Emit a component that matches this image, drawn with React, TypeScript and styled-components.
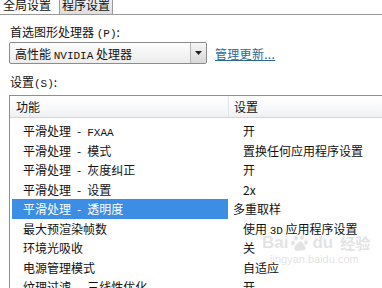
import React from "react";
import styled, { createGlobalStyle } from "styled-components";

const GlobalStyle = createGlobalStyle`
  html, body {
    margin: 0;
    padding: 0;
    background: #fff;
  }
  body {
    font-family: "Noto Sans CJK SC", "Liberation Sans", sans-serif;
    font-size: 12px;
    color: #111;
    overflow: hidden;
  }
`;

const Window = styled.div`
  position: relative;
  width: 382px;
  height: 288px;
  overflow: hidden;
  background: #fff;
`;

const TabStrip = styled.div`
  display: flex;
  align-items: flex-end;
  height: 14px;
  overflow: hidden;
  border-bottom: 1px solid #9a9a9a;
`;

const Tab = styled.div<{ $active?: boolean }>`
  flex: none;
  height: 20px;
  line-height: 20px;
  padding: ${({ $active }) => ($active ? "0 6px 0 4px" : "0 2px")};
  margin-left: ${({ $active }) => ($active ? "-2px" : "1px")};
  box-sizing: border-box;
  border: 1px solid ${({ $active }) => ($active ? "#fff" : "#9a9a9a")};
  border-bottom: none;
  background: ${({ $active }) =>
    $active ? "#fff" : "linear-gradient(#f4f4f4, #dedede)"};
  white-space: nowrap;
`;

const Pane = styled.div`
  padding: 9px 0 0 9px;
`;

const Label = styled.div`
  height: 16px;
  line-height: 16px;
  padding-left: 1px;
  white-space: nowrap;
`;

const Latin = styled.span`
  font-family: "Liberation Mono", monospace;
  font-size: 11px;
`;

const SelectRow = styled.div`
  display: flex;
  align-items: center;
  gap: 8px;
  margin-top: 2px;
  height: 22px;
`;

const Select = styled.div`
  display: flex;
  align-items: center;
  justify-content: space-between;
  width: 198px;
  height: 22px;
  box-sizing: border-box;
  border: 1px solid #8c8c8c;
  border-radius: 2px;
  background: linear-gradient(#fdfdfd, #ececec);
  padding-left: 5px;
  white-space: nowrap;
`;

const ArrowButton = styled.div`
  display: flex;
  align-items: center;
  justify-content: center;
  width: 16px;
  height: 20px;
  box-sizing: border-box;
  border-left: 1px solid #b5b5b5;
  background: linear-gradient(#f6f6f6, #d8d8d8);
  border-radius: 0 2px 2px 0;
`;

const Link = styled.a`
  color: #2a6796;
  text-decoration: underline;
  white-space: nowrap;
  letter-spacing: 0.3px;
`;

const SectionLabel = styled(Label)`
  margin-top: 10px;
`;

const ListBox = styled.div`
  margin-top: 5px;
  width: 390px;
  height: 210px;
  box-sizing: border-box;
  border: 1px solid #8a8e95;
  background: #fff;
`;

const HeaderRow = styled.div`
  display: grid;
  grid-template-columns: 218px 1fr;
  height: 21px;
  border-bottom: 1px solid #d6d6d6;
  background: linear-gradient(#ffffff 0%, #f7f8f9 60%, #eef0f2 100%);
`;

const HeaderCell = styled.div<{ $divider?: boolean }>`
  line-height: 21px;
  padding-left: ${({ $divider }) => ($divider ? "5px" : "6px")};
  border-left: ${({ $divider }) => ($divider ? "1px solid #e2e3e5" : "none")};
`;

const Rows = styled.div`
  padding-top: 3px;
`;

const Row = styled.div`
  display: grid;
  grid-template-columns: 218px 1fr;
  height: 19.5px;
`;

const NameCell = styled.div<{ $selected?: boolean }>`
  line-height: 19px;
  padding-left: 11px;
  margin-left: 2px;
  white-space: pre;
  color: ${({ $selected }) => ($selected ? "#fff" : "#111")};
  background: ${({ $selected }) => ($selected ? "#3b8ee4" : "transparent")};
`;

const ValueCell = styled.div<{ $selected?: boolean }>`
  line-height: 19px;
  padding-left: ${({ $selected }) => ($selected ? "5px" : "15px")};
  white-space: nowrap;
`;

const Watermark = styled.div`
  position: absolute;
  left: 262px;
  top: 232px;
  display: flex;
  flex-direction: column;
  align-items: flex-start;
  opacity: 0.2;
  color: #777;
  pointer-events: none;
`;

const MarkTop = styled.div`
  display: flex;
  align-items: center;
  gap: 3px;
  font-family: "Liberation Sans", sans-serif;
  font-size: 17px;
  font-weight: bold;
`;

const MarkCn = styled.span`
  font-family: "Noto Sans CJK SC", sans-serif;
  font-size: 15px;
  margin-left: 4px;
`;

const MarkUrl = styled.div`
  font-family: "Liberation Sans", sans-serif;
  font-size: 11px;
  margin-left: 8px;
`;

const D = "\u2002-\u2002";

const rows: { name: React.ReactNode; value: React.ReactNode; selected?: boolean }[] = [
  { name: <>平滑处理{D}<Latin>FXAA</Latin></>, value: "开" },
  { name: `平滑处理${D}模式`, value: "置换任何应用程序设置" },
  { name: `平滑处理${D}灰度纠正`, value: "开" },
  { name: `平滑处理${D}设置`, value: "2x" },
  { name: `平滑处理${D}透明度`, value: "多重取样", selected: true },
  { name: "最大预渲染帧数", value: <>使用 <Latin>3D</Latin> 应用程序设置</> },
  { name: "环境光吸收", value: "关" },
  { name: "电源管理模式", value: "自适应" },
  { name: `纹理过滤${D}三线性优化`, value: "开" },
];

const App = () => {
  return (
    <Window>
      <GlobalStyle />
      <TabStrip>
        <Tab $active>全局设置</Tab>
        <Tab>程序设置</Tab>
      </TabStrip>
      <Pane>
        <Label>
          首选图形处理器 <Latin>(P)</Latin>:
        </Label>
        <SelectRow>
          <Select>
            <span>
              高性能 <Latin>NVIDIA</Latin> 处理器
            </span>
            <ArrowButton>
              <svg width="7" height="4" viewBox="0 0 7 4">
                <path d="M0 0h7L3.5 4z" fill="#222" />
              </svg>
            </ArrowButton>
          </Select>
          <Link>管理更新...</Link>
        </SelectRow>
        <SectionLabel>
          设置<Latin>(S)</Latin>:
        </SectionLabel>
        <ListBox>
          <HeaderRow>
            <HeaderCell>功能</HeaderCell>
            <HeaderCell $divider>设置</HeaderCell>
          </HeaderRow>
          <Rows>
            {rows.map((r, i) => (
              <Row key={i}>
                <NameCell $selected={r.selected}>{r.name}</NameCell>
                <ValueCell $selected={r.selected}>{r.value}</ValueCell>
              </Row>
            ))}
          </Rows>
        </ListBox>
      </Pane>
      <Watermark>
        <MarkTop>
          <span>Bai</span>
          <svg width="18" height="18" viewBox="0 0 18 18">
            <ellipse cx="5" cy="4" rx="2" ry="2.6" fill="#777" />
            <ellipse cx="11" cy="3.5" rx="2" ry="2.6" fill="#777" />
            <ellipse cx="2" cy="9" rx="1.8" ry="2.3" fill="#777" />
            <ellipse cx="15" cy="8.5" rx="1.8" ry="2.3" fill="#777" />
            <path d="M8 8c-3 3-6 5-4 8 2 2 6 0 10 0 2-2-1-5-3-8-1-1-2-1-3 0z" fill="#777" />
          </svg>
          <span>du</span>
          <MarkCn>经验</MarkCn>
        </MarkTop>
        <MarkUrl>jingyan.baidu.com</MarkUrl>
      </Watermark>
    </Window>
  );
};

export default App;
